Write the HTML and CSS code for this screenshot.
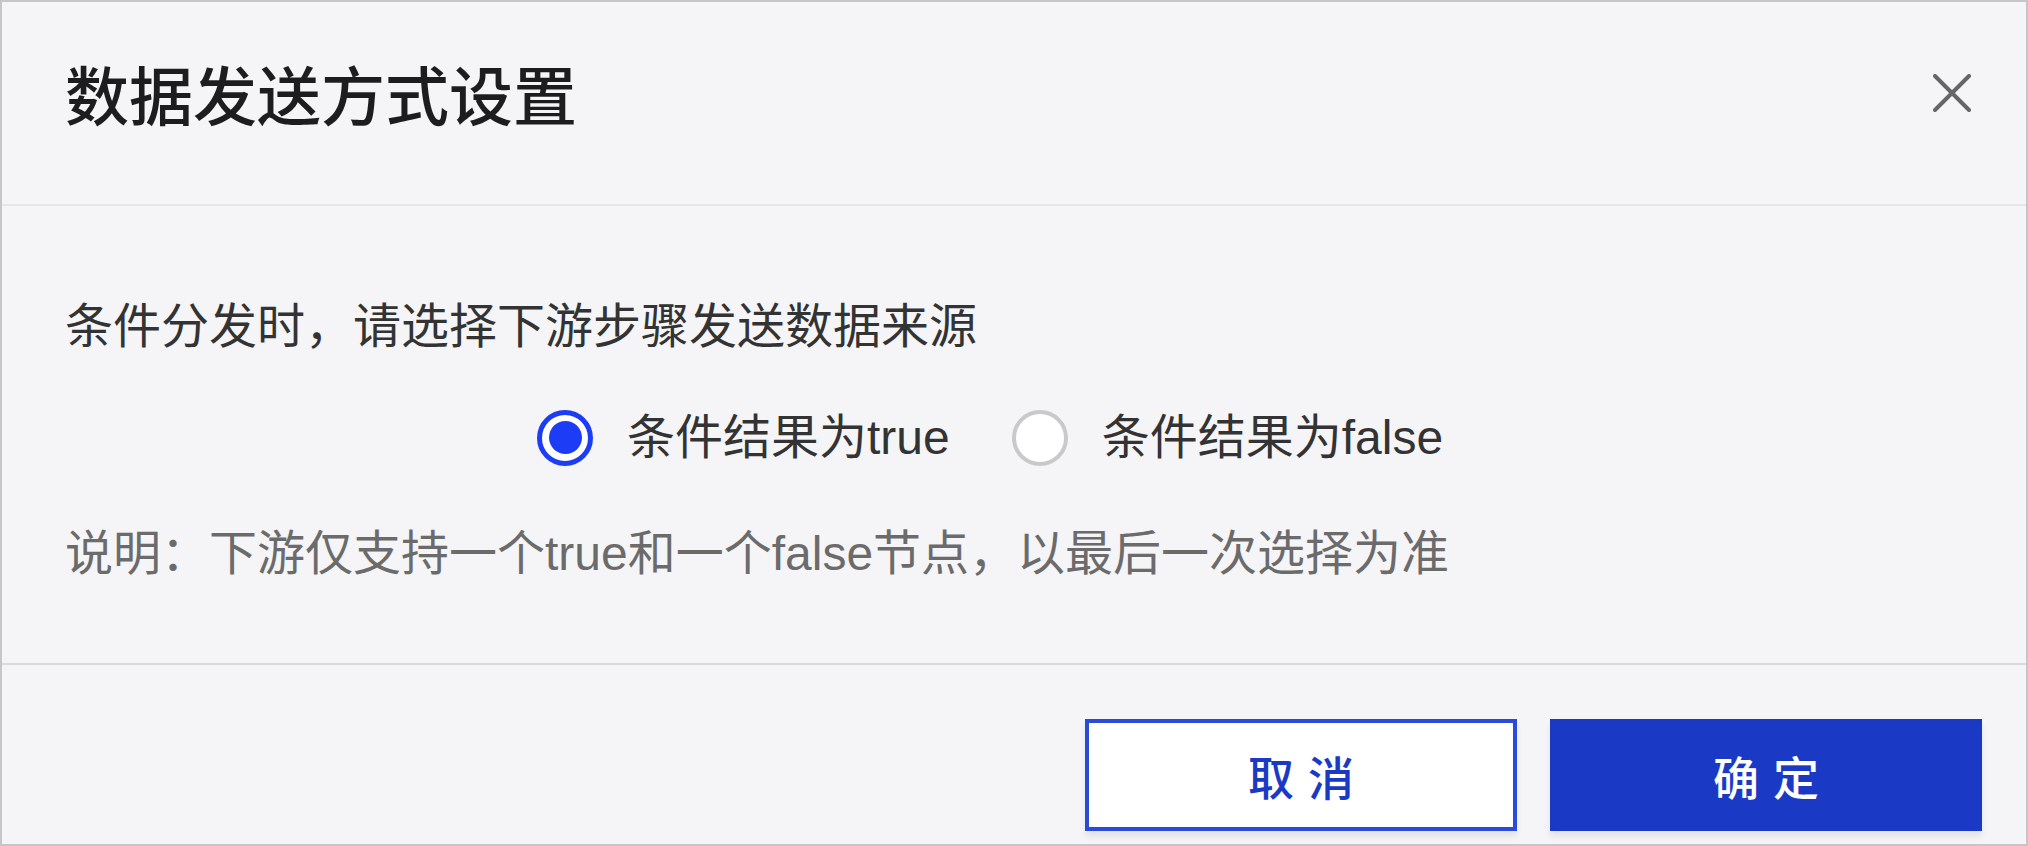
FILE: index.html
```html
<!DOCTYPE html>
<html lang="zh-CN">
<head>
<meta charset="utf-8">
<title>数据发送方式设置</title>
<link rel="stylesheet" href="styles.css">
</head>
<body>
<div class="dialog">
  <div class="dialog-header">
    <div class="dialog-title">数据发送方式设置</div>
    <button class="close-btn" aria-label="关闭">
      <svg width="38" height="38" viewBox="0 0 38 38"><path d="M2 2 L36 36 M36 2 L2 36" stroke="#666" stroke-width="4" stroke-linecap="round" fill="none"/></svg>
    </button>
  </div>
  <div class="dialog-body">
    <div class="prompt">条件分发时，请选择下游步骤发送数据来源</div>
    <div class="radio-group">
      <label class="radio-item">
        <span class="radio radio-checked"><span class="radio-dot"></span></span>
        <span class="radio-text">条件结果为true</span>
      </label>
      <label class="radio-item">
        <span class="radio"></span>
        <span class="radio-text">条件结果为false</span>
      </label>
    </div>
    <div class="note">说明：下游仅支持一个true和一个false节点，以最后一次选择为准</div>
  </div>
  <div class="dialog-footer">
    <button class="btn btn-cancel">取消</button>
    <button class="btn btn-ok">确定</button>
  </div>
</div>
</body>
</html>
```
FILE: styles.css
```css
* { box-sizing: border-box; }
html, body { margin: 0; padding: 0; }
body {
  width: 2028px;
  height: 846px;
  overflow: hidden;
  background: #f5f5f7;
  font-family: "Liberation Sans", "Noto Sans CJK SC", sans-serif;
}
.dialog {
  width: 2028px;
  height: 846px;
  border: 2px solid #c6c6ca;
  background: #f5f5f7;
  display: flex;
  flex-direction: column;
}
.dialog-header {
  height: 204px;
  flex: none;
  display: flex;
  align-items: flex-start;
  justify-content: space-between;
  padding: 64px 55px 0 63px;
  border-bottom: 2px solid #e6e6e9;
}
.dialog-title {
  font-size: 64px;
  line-height: 64px;
  font-weight: 500;
  color: #1d1d1f;
}
.close-btn {
  border: 0;
  background: transparent;
  padding: 0;
  margin-top: 8px;
  width: 38px;
  height: 38px;
  cursor: pointer;
}
.close-btn svg { display: block; }
.dialog-body {
  height: 459px;
  flex: none;
  padding: 97px 0 0 63px;
  border-bottom: 2px solid #d9d9dd;
}
.prompt {
  font-size: 48px;
  line-height: 48px;
  color: #333;
}
.radio-group {
  display: flex;
  align-items: center;
  margin-top: 58px;
  padding-left: 472px;
  height: 57px;
}
.radio-item {
  display: flex;
  align-items: center;
  margin-right: 62px;
}
.radio {
  width: 56px;
  height: 56px;
  border-radius: 50%;
  border: 4px solid #c9c9c9;
  background: #fff;
  display: flex;
  align-items: center;
  justify-content: center;
  flex: none;
}
.radio-checked {
  border: 5px solid #1c3cf5;
}
.radio-dot {
  width: 33px;
  height: 33px;
  border-radius: 50%;
  background: #1c3cf5;
}
.radio-text {
  margin-left: 34px;
  font-size: 48px;
  line-height: 48px;
  color: #333;
}
.note {
  margin-top: 64px;
  font-size: 48px;
  line-height: 48px;
  color: #6b6b6b;
}
.dialog-footer {
  flex: 1;
  display: flex;
  justify-content: flex-end;
  align-items: flex-start;
  padding: 54px 44px 0 0;
  gap: 33px;
}
.btn {
  width: 432px;
  height: 112px;
  font-family: "Noto Sans CJK SC", sans-serif;
  font-size: 46px;
  font-weight: 500;
  letter-spacing: 14px;
  text-indent: 14px;
  border-radius: 0;
  box-shadow: 0 6px 6px rgba(0, 0, 0, 0.07);
  cursor: pointer;
}
.btn-cancel {
  background: #fff;
  border: 4px solid #2a4bd7;
  color: #1a3ac6;
}
.btn-ok {
  background: #1a3ac6;
  border: 4px solid #1a3ac6;
  color: #fff;
}
```
